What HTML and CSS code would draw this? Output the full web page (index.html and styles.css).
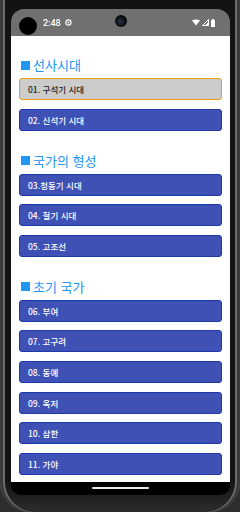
FILE: index.html
```html
<!DOCTYPE html>
<html lang="ko">
<head>
    <meta charset="UTF-8">
    <meta name="viewport" content="width=device-width, initial-scale=1.0">
    <title>한국사 시대</title>
    <link rel="stylesheet" href="styles.css">
</head>
<body>
    <div class="device">
        <div class="screen">
            <div class="status-bar">
                <span class="time">2:48</span>
                <svg class="sync-icon" width="7" height="7" viewBox="0 0 7 7">
                    <circle cx="3.5" cy="3.5" r="2.6" fill="none" stroke="#fff" stroke-width="1.1"/>
                    <circle cx="3.5" cy="3.5" r="0.9" fill="#fff"/>
                </svg>
                <span class="camera"></span>
                <div class="sys-icons">
                    <svg width="8" height="7" viewBox="0 0 8 7">
                        <path d="M0 1.6 Q4 -0.8 8 1.6 L4 6.6 Z" fill="#fff"/>
                    </svg>
                    <svg width="7" height="7" viewBox="0 0 7 7">
                        <path d="M6.5 0.5 L6.5 6.5 L0.5 6.5 Z" fill="none" stroke="#fff" stroke-width="1"/>
                        <path d="M6.5 3 L6.5 6.5 L3 6.5 Z" fill="#fff"/>
                    </svg>
                    <svg width="4" height="8" viewBox="0 0 4 8">
                        <rect x="1" y="0" width="2" height="1" fill="#fff"/>
                        <rect x="0" y="1" width="4" height="7" rx="0.5" fill="#fff"/>
                    </svg>
                </div>
            </div>

            <div class="content">
                <section class="era">
                    <h2 class="era-title"><span class="mark"></span>선사시대</h2>
                    <div class="era-list">
                        <button class="era-btn selected">01. 구석기 시대</button>
                        <button class="era-btn">02. 신석기 시대</button>
                    </div>
                </section>

                <section class="era">
                    <h2 class="era-title"><span class="mark"></span>국가의 형성</h2>
                    <div class="era-list">
                        <button class="era-btn">03.청동기 시대</button>
                        <button class="era-btn">04. 철기 시대</button>
                        <button class="era-btn">05. 고조선</button>
                    </div>
                </section>

                <section class="era">
                    <h2 class="era-title"><span class="mark"></span>초기 국가</h2>
                    <div class="era-list">
                        <button class="era-btn">06. 부여</button>
                        <button class="era-btn">07. 고구려</button>
                        <button class="era-btn">08. 동예</button>
                        <button class="era-btn">09. 옥저</button>
                        <button class="era-btn">10. 삼한</button>
                        <button class="era-btn">11. 가야</button>
                    </div>
                </section>
            </div>

            <div class="nav-bar">
                <span class="home-pill"></span>
            </div>
        </div>
        <span class="touch-dot"></span>
    </div>
</body>
</html>
```

FILE: styles.css
```css
body {
    margin: 0;
    background-color: #2e2e2e;
    font-family: "Noto Sans CJK KR", "Noto Sans", sans-serif;
}
.device {
    position: relative;
    width: 240px;
    height: 512px;
    box-sizing: border-box;
    padding: 9px 10px 0 11px;
    background: linear-gradient(#131313 0, #131313 480px, #2c2c2c 512px);
    border-radius: 0 0 30px 30px;
    box-shadow: inset 3px 0 0 #3a3a3a, inset 5px 0 0 #6a6a6a,
                inset -3px 0 0 #3a3a3a, inset -5px 0 0 #6a6a6a;
}
.screen {
    height: 486px;
    display: flex;
    flex-direction: column;
    border-radius: 13px 13px 10px 10px;
    overflow: hidden;
    background-color: #000;
}

/* status bar */
.status-bar {
    position: relative;
    height: 27px;
    flex-shrink: 0;
    display: flex;
    align-items: center;
    padding: 0 15px 0 32px;
    background-color: #707070;
    color: #fff;
}
.time {
    font-family: Roboto, sans-serif;
    font-size: 9px;
    font-weight: 500;
    margin-right: 4px;
}
.sync-icon {
    display: block;
}
.camera {
    position: absolute;
    left: 104px;
    top: 6px;
    width: 12px;
    height: 12px;
    border-radius: 50%;
    background: radial-gradient(circle at 45% 55%, #2a3550 0, #101418 45%, #050505 70%);
}
.sys-icons {
    margin-left: auto;
    display: flex;
    align-items: center;
    gap: 2px;
}
.sys-icons svg {
    display: block;
}

/* list content */
.content {
    flex: 1;
    overflow: hidden;
    padding: 21px 8px 8px;
    background-color: #fff;
}
.era + .era {
    margin-top: 22px;
}
.era-title {
    display: flex;
    align-items: center;
    gap: 3px;
    margin: 0 0 5px 0;
    padding-left: 2px;
    font-size: 13px;
    line-height: 16px;
    font-weight: 400;
    color: #2196f3;
}
.mark {
    width: 9px;
    height: 9px;
    background-color: #2196f3;
}
.era-list {
    display: flex;
    flex-direction: column;
    gap: 8.6px;
}
.era-btn {
    height: 22px;
    box-sizing: border-box;
    padding: 0 0 0 8px;
    text-align: left;
    font-family: "Noto Sans CJK KR", "Noto Sans", sans-serif;
    font-size: 8.5px;
    font-weight: 500;
    color: #fff;
    background-color: #3f51b5;
    border: 1px solid #1c3aa9;
    border-radius: 3px;
}
.era-btn.selected {
    color: #222;
    background-color: #cccccc;
    border-color: #f0a00c;
}

/* navigation bar */
.nav-bar {
    height: 13px;
    flex-shrink: 0;
    display: flex;
    justify-content: center;
    padding-top: 5px;
    box-sizing: border-box;
    background-color: #000;
}
.home-pill {
    width: 57px;
    height: 2px;
    border-radius: 1px;
    background-color: #e8e8e8;
}

.touch-dot {
    position: absolute;
    left: 19px;
    top: 17px;
    width: 18px;
    height: 18px;
    border-radius: 50%;
    background-color: #000;
}
```
